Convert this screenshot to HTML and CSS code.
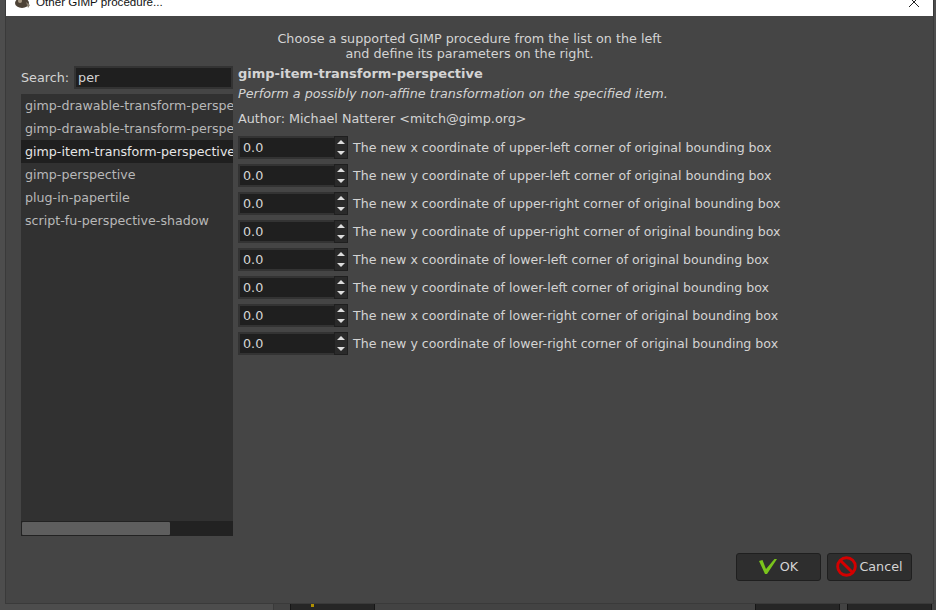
FILE: index.html
```html
<!DOCTYPE html>
<html lang="en">
<head>
<meta charset="utf-8">
<title>Other GIMP procedure...</title>
<link rel="stylesheet" href="styles.css">
</head>
<body>
<div class="desktop">
  <div class="behind-panel"></div>
  <div class="behind-btn behind-a"><span class="dot"></span></div>
  <div class="behind-btn behind-b"></div>
  <div class="behind-btn behind-c"></div>
  <div class="window">
    <div class="titlebar">
      <svg class="app-icon" width="18" height="16" viewBox="0 0 18 16"><ellipse cx="8" cy="9" rx="7" ry="5" fill="#4d4236"/><path d="M12 8l4 3-2 3z" fill="#8a8070"/><circle cx="6" cy="7" r="2" fill="#a89a85"/></svg>
      <span class="title">Other GIMP procedure...</span>
      <svg class="close" width="12" height="12" viewBox="0 0 12 12"><path d="M1 1l10 10M11 1L1 11" stroke="#222" stroke-width="1" fill="none"/></svg>
    </div>
    <div class="content">
      <p class="intro">Choose a supported GIMP procedure from the list on the left<br>and define its parameters on the right.</p>
      <div class="main">
        <div class="left">
          <div class="search">
            <label class="search-label">Search:</label>
            <div class="entry search-entry">per</div>
          </div>
          <div class="list">
            <div class="rows">
              <div class="row">gimp-drawable-transform-perspective</div>
              <div class="row">gimp-drawable-transform-perspective-default</div>
              <div class="row selected">gimp-item-transform-perspective</div>
              <div class="row">gimp-perspective</div>
              <div class="row">plug-in-papertile</div>
              <div class="row">script-fu-perspective-shadow</div>
            </div>
            <div class="hscroll"><div class="thumb"></div></div>
          </div>
        </div>
        <div class="right">
          <div class="proc-name">gimp-item-transform-perspective</div>
          <div class="proc-desc">Perform a possibly non-affine transformation on the specified item.</div>
          <div class="proc-author">Author: Michael Natterer &lt;mitch@gimp.org&gt;</div>
          <div class="params">
            <div class="param"><div class="spin"><div class="spin-value">0.0</div><div class="spin-btns"><span class="up"></span><span class="down"></span></div></div><span class="param-label">The new x coordinate of upper-left corner of original bounding box</span></div>
            <div class="param"><div class="spin"><div class="spin-value">0.0</div><div class="spin-btns"><span class="up"></span><span class="down"></span></div></div><span class="param-label">The new y coordinate of upper-left corner of original bounding box</span></div>
            <div class="param"><div class="spin"><div class="spin-value">0.0</div><div class="spin-btns"><span class="up"></span><span class="down"></span></div></div><span class="param-label">The new x coordinate of upper-right corner of original bounding box</span></div>
            <div class="param"><div class="spin"><div class="spin-value">0.0</div><div class="spin-btns"><span class="up"></span><span class="down"></span></div></div><span class="param-label">The new y coordinate of upper-right corner of original bounding box</span></div>
            <div class="param"><div class="spin"><div class="spin-value">0.0</div><div class="spin-btns"><span class="up"></span><span class="down"></span></div></div><span class="param-label">The new x coordinate of lower-left corner of original bounding box</span></div>
            <div class="param"><div class="spin"><div class="spin-value">0.0</div><div class="spin-btns"><span class="up"></span><span class="down"></span></div></div><span class="param-label">The new y coordinate of lower-left corner of original bounding box</span></div>
            <div class="param"><div class="spin"><div class="spin-value">0.0</div><div class="spin-btns"><span class="up"></span><span class="down"></span></div></div><span class="param-label">The new x coordinate of lower-right corner of original bounding box</span></div>
            <div class="param"><div class="spin"><div class="spin-value">0.0</div><div class="spin-btns"><span class="up"></span><span class="down"></span></div></div><span class="param-label">The new y coordinate of lower-right corner of original bounding box</span></div>
          </div>
        </div>
      </div>
      <div class="actions">
        <button class="btn ok"><svg width="18" height="15" viewBox="0 0 18 15"><path d="M0 2 L3.5 1 L7 10 L15.5 0 L18 0 L8 15 L6 15 Z" fill="#7ac41c"/></svg><span>OK</span></button>
        <button class="btn cancel"><svg width="21" height="21" viewBox="0 0 20 20"><circle cx="10" cy="10" r="8.4" fill="none" stroke="#d40000" stroke-width="2.8"/><path d="M4.5 4.5L15.5 15.5" stroke="#d40000" stroke-width="2.8"/></svg><span>Cancel</span></button>
      </div>
    </div>
  </div>
</div>
</body>
</html>
```
FILE: styles.css
```css
html, body { margin: 0; padding: 0; }
body { width: 936px; height: 610px; overflow: hidden; background: #4d4d4d; font-family: "DejaVu Sans", sans-serif; font-size: 12.75px; color: #d4d4d4; }
.desktop { position: relative; width: 936px; height: 610px; overflow: hidden; }
.behind-panel { position: absolute; left: 273px; right: 0; top: 600px; bottom: 0; background: #434343; border-left: 1px solid #3a3a3a; }
.behind-btn { position: absolute; top: 603px; height: 20px; width: 85px; background: #262626; border: 1px solid #161616; box-sizing: border-box; }
.behind-a { left: 290px; }
.behind-b { left: 755px; }
.behind-c { left: 847px; }
.dot { position: absolute; left: 20px; top: 0; width: 3px; height: 3px; background: #b09000; }
.window { position: absolute; left: 5px; top: -14px; width: 929px; height: 618px; display: flex; flex-direction: column; background: #454545; border: 1px solid #3a3a3a; box-sizing: border-box; }
.titlebar { height: 29px; flex: none; background: #fff; display: flex; align-items: center; color: #111; font-family: "Liberation Sans", sans-serif; font-size: 11.6px; padding: 0 8px; gap: 4px; }
.title { flex: 1; }
.close { margin-right: 5px; }
.content { flex: 1; display: flex; flex-direction: column; padding: 15px 15px 0; min-height: 0; }
.intro { margin: 0; text-align: center; line-height: 15px; }
.main { display: flex; margin-top: 5px; gap: 5px; flex: 1; min-height: 0; }
.left { width: 212px; flex: none; display: flex; flex-direction: column; }
.search { display: flex; align-items: center; height: 23px; gap: 5px; }
.search-label { flex: none; }
.entry { background: #1f1f1f; border: 2px solid #333; box-sizing: border-box; height: 23px; flex: 1; line-height: 19px; padding-left: 2px; color: #d4d4d4; }
.list { width: 212px; height: 442px; margin-top: 5px; background: #313131; display: flex; flex-direction: column; }
.rows { flex: 1; overflow: hidden; }
.row { height: 23px; line-height: 23px; padding-left: 4px; white-space: nowrap; overflow: hidden; color: #b8b8b8; font-size: 12.65px; }
.row.selected { background: #1f1f1f; color: #e6e6e6; }
.hscroll { height: 15px; background: #222; flex: none; display: flex; align-items: center; padding: 0 1px; }
.thumb { width: 148px; height: 13px; background: #5e5e5e; border-radius: 1px; }
.right { flex: 1; min-width: 0; margin-top: -2px; }
.proc-name { font-weight: 700; line-height: 20px; font-size: 13px; }
.proc-desc { font-style: italic; line-height: 20px; }
.proc-author { line-height: 20px; margin-top: 5px; }
.params { margin-top: 7px; display: flex; flex-direction: column; gap: 5px; }
.param { display: flex; align-items: center; gap: 5px; height: 23px; }
.param-label { font-size: 12.58px; }
.spin { display: flex; width: 110px; height: 23px; background: #333; box-sizing: border-box; padding: 2px; flex: none; }
.spin-value { width: 94px; background: #1f1f1f; line-height: 19px; padding-left: 3px; box-sizing: border-box; }
.spin-btns { flex: 1; display: flex; flex-direction: column; background: #2a2a2a; margin: -2px -2px -2px 0; border: 1px solid #1f1f1f; }
.spin-btns span { flex: 1; position: relative; }
.up::after { content: ""; position: absolute; left: 2px; top: 3px; border-left: 4px solid transparent; border-right: 4px solid transparent; border-bottom: 4px solid #ddd; }
.down::after { content: ""; position: absolute; left: 2px; top: 3px; border-left: 4px solid transparent; border-right: 4px solid transparent; border-top: 4px solid #ddd; }
.actions { display: flex; justify-content: flex-end; gap: 6px; padding: 0 6px 22px 0; flex: none; }
.btn { width: 85px; height: 28px; background: #2e2e2e; border: 1px solid #1f1f1f; border-radius: 3px; color: #d4d4d4; font: 12.75px "DejaVu Sans", sans-serif; display: flex; align-items: center; justify-content: center; gap: 2px; padding: 0 0 2px; }
.ok { gap: 3px; }
```
